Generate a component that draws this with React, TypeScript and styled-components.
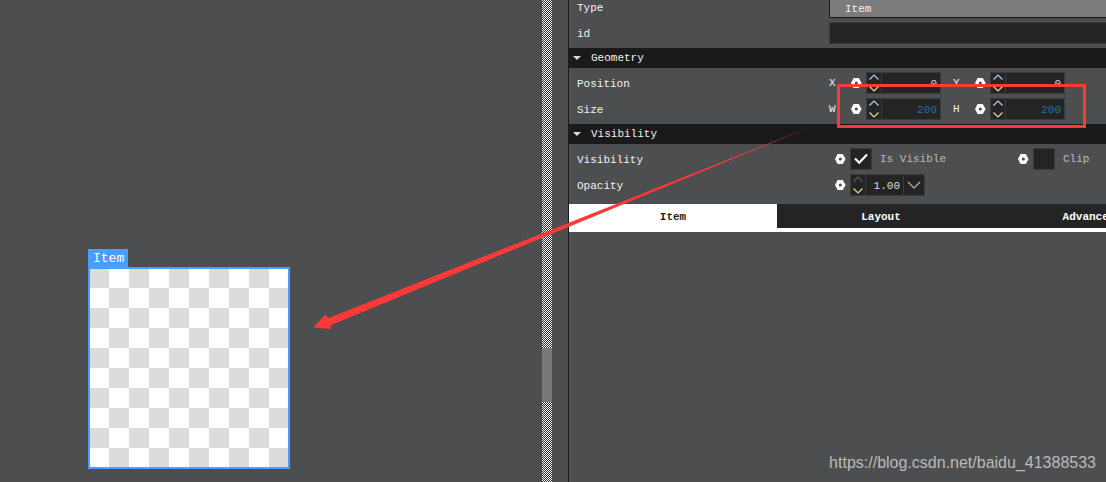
import React from "react";
import styled, { createGlobalStyle, css } from "styled-components";

const GlobalStyle = createGlobalStyle`
  * { box-sizing: border-box; }
  html, body, #root { height: 100%; }
  body {
    margin: 0;
    overflow: hidden;
    background: #4d4e50;
    color: #f2f2f2;
    font: 11px/20px "Liberation Mono", monospace;
  }
  button, input, select { font: inherit; color: inherit; margin: 0; }
`;

const Page = styled.div`
  position: relative;
  display: flex;
  min-height: 100%;
  overflow: hidden;
`;

const Canvas = styled.main`
  flex: 1;
  min-width: 0;
  display: flex;
  justify-content: space-between;
`;

const Stage = styled.div`
  padding: 249px 0 0 88px;
`;

const ItemTag = styled.div`
  width: 40px;
  height: 18px;
  padding-left: 5px;
  background: #4a9eff;
  color: #fff;
  font-size: 13px;
  line-height: 20px;
`;

const Checker = styled.div`
  width: 202px;
  height: 202px;
  border: 2px solid #4a9eff;
  background: repeating-conic-gradient(#fff 0 25%, #dcdcdc 0 50%) -1px -1px / 40px 40px;
`;

const ScrollTrack = styled.div`
  width: 10px;
  margin-right: 16px;
  padding-top: 348px;
  background: repeating-conic-gradient(#2b2b2b 0 25%, #fff 0 50%) 0 0 / 2px 2px;
`;

const ScrollThumb = styled.div`
  height: 54px;
  background: #787878;
`;

const Panel = styled.aside`
  flex: 0 0 538px;
  min-width: 0;
  overflow: hidden;
  border-left: 1px solid #1a1a1a;
`;

const Group = styled.div<{ $cut?: boolean; $last?: boolean }>`
  display: grid;
  gap: 4px;
  padding: 4px 0 ${(p) => (p.$last ? 8 : 4)}px 8px;
  ${(p) => p.$cut && css`margin-top: -8px;`}
`;

const Row = styled.div`
  display: grid;
  grid-template-columns: 252px minmax(0, 1fr);
  height: 22px;
  line-height: 24px;
`;

const Fields = styled.div<{ $inset?: boolean }>`
  display: flex;
  align-items: center;
  height: 22px;
  padding-left: ${(p) => (p.$inset ? 6 : 0)}px;
`;

const TypeSelect = styled.select`
  width: 100%;
  height: 22px;
  padding: 0 15px;
  appearance: none;
  border: 1px solid #1a1a1a;
  border-right: 0;
  border-radius: 0;
  background: #7b7b7b;
`;

const TextInput = styled.input`
  width: 100%;
  height: 22px;
  border: 1px solid #3b3b3c;
  border-right: 0;
  background: #242424;
`;

const Heading = styled.button`
  display: flex;
  align-items: center;
  gap: 10px;
  width: 100%;
  height: 20px;
  padding: 0 4px;
  border: 0;
  background: #1a1a1a;
  text-align: left;
`;

const Unit = styled.div`
  display: flex;
  align-items: center;
  margin-right: 12px;
`;

const UnitLabel = styled.label`
  width: 22px;
`;

const Binding = styled.button`
  display: flex;
  width: 11px;
  height: 22px;
  align-items: center;
  margin-right: 4px;
  padding: 0;
  border: 0;
  background: none;
`;

const SpinBox = styled.div`
  display: flex;
  width: 75px;
  height: 22px;
  border: 1px solid #3b3b3c;
  background: #242424;
`;

const Steps = styled.div`
  display: flex;
  flex-direction: column;
  justify-content: space-between;
  flex: none;
  width: 15px;
  padding: 1px 0;
  border-right: 1px solid #3b3b3c;
`;

const Step = styled.button`
  display: flex;
  justify-content: center;
  height: 6px;
  padding: 0;
  border: 0;
  background: none;
`;

const Value = styled.input<{ $changed?: boolean }>`
  flex: 1;
  width: 0;
  min-width: 0;
  padding: 1px 3px 0;
  border: 0;
  background: none;
  text-align: right;
  color: ${(p) => (p.$changed ? "#1b76ac" : "#dedede")};
`;

const DropButton = styled.button`
  display: flex;
  align-items: center;
  justify-content: center;
  flex: none;
  width: 21px;
  padding: 0;
  border: 0;
  border-left: 1px solid #3b3b3c;
  background: none;
`;

const CheckField = styled.div`
  display: flex;
  flex: 0 0 183px;
  align-items: center;
`;

const CheckLabel = styled.label`
  display: flex;
  align-items: center;
  gap: 8px;
  color: #b9b9b9;
`;

const CheckBox = styled.input`
  width: 22px;
  height: 22px;
  appearance: none;
  border: 1px solid #3b3b3c;
  background: #242424;
`;

const CheckWrap = styled.span`
  position: relative;
  display: flex;

  svg {
    position: absolute;
    inset: 0;
    pointer-events: none;
  }
`;

const Tabs = styled.div`
  display: flex;
  border-bottom: 4px solid #fff;
`;

const Tab = styled.button<{ $active?: boolean }>`
  flex: 0 0 208px;
  height: 24px;
  padding: 2px 0 0;
  border: 0;
  background: ${(p) => (p.$active ? "#fff" : "#242424")};
  color: ${(p) => (p.$active ? "#242424" : "#fff")};
  font-weight: bold;
`;

const Annotation = styled.svg`
  position: absolute;
  top: 0;
  left: 0;
  pointer-events: none;
`;

const Watermark = styled.a`
  position: absolute;
  right: 10px;
  bottom: 9px;
  color: #b9babb;
  font: 16px/20px "Liberation Sans", Arial, sans-serif;
  text-decoration: none;
`;

const HexIcon = () => (
  <svg width="11" height="10" viewBox="0 0 11 10" aria-hidden="true">
    <path
      d="M2.6 0h5.2L10.6 5l-2.8 5H2.6L0 5Z M5.3 3.4a1.6 1.6 0 1 0 0 3.2a1.6 1.6 0 1 0 0-3.2Z"
      fill="#fff"
      fillRule="evenodd"
    />
  </svg>
);

const Chevron = ({ up, color, wide }: { up?: boolean; color: string; wide?: boolean }) => (
  <svg width={wide ? 14 : 10} height={wide ? 8 : 6} viewBox={wide ? "0 0 14 8" : "0 0 10 6"} aria-hidden="true">
    <path
      d={wide ? "M1 1l6 6l6-6" : up ? "M0.500 5.500L5 1l4.500 4.500" : "M0.500 0.500L5 5l4.500-4.500"}
      fill="none"
      stroke={color}
      strokeWidth="1.2"
    />
  </svg>
);

const SectionHeading = ({ title }: { title: string }) => (
  <Heading type="button" aria-expanded="true">
    <svg width="8" height="4" viewBox="0 0 8 4" aria-hidden="true">
      <path d="M0 0h8L4 4Z" fill="#dcdcdc" />
    </svg>
    {title}
  </Heading>
);

const StepButtons = ({ atMax }: { atMax?: boolean }) => (
  <Steps>
    <Step type="button" aria-label="Increase">
      <Chevron up color={atMax ? "#5c5c5c" : "#b4cff0"} />
    </Step>
    <Step type="button" aria-label="Decrease">
      <Chevron color="#ecd3a4" />
    </Step>
  </Steps>
);

const BindingButton = () => (
  <Binding type="button" aria-label="Binding">
    <HexIcon />
  </Binding>
);

const NumberUnit = ({ label, value, changed }: { label: string; value: string; changed?: boolean }) => (
  <Unit>
    <UnitLabel htmlFor={`geometry-${label}`}>{label}</UnitLabel>
    <BindingButton />
    <SpinBox>
      <StepButtons />
      <Value id={`geometry-${label}`} defaultValue={value} $changed={changed} />
    </SpinBox>
  </Unit>
);

const CheckUnit = ({ label, checked }: { label: string; checked?: boolean }) => (
  <CheckField>
    <BindingButton />
    <CheckLabel>
      <CheckWrap>
        <CheckBox type="checkbox" defaultChecked={checked} />
        {checked && (
          <svg width="22" height="22" viewBox="0 0 22 22" aria-hidden="true">
            <path d="M5 10.500l4.200 4.200l7.800-8.200" fill="none" stroke="#fff" strokeWidth="2.200" />
          </svg>
        )}
      </CheckWrap>
      {label}
    </CheckLabel>
  </CheckField>
);

export default function App() {
  return (
    <Page>
      <GlobalStyle />
      <Canvas>
        <Stage>
          <ItemTag>Item</ItemTag>
          <Checker />
        </Stage>
        <ScrollTrack>
          <ScrollThumb />
        </ScrollTrack>
      </Canvas>

      <Panel>
        <Group $cut>
          <Row>
            <label htmlFor="type">Type</label>
            <TypeSelect id="type" defaultValue="Item">
              <option>Item</option>
            </TypeSelect>
          </Row>
          <Row>
            <label htmlFor="item-id">id</label>
            <TextInput id="item-id" />
          </Row>
        </Group>

        <SectionHeading title="Geometry" />
        <Group>
          <Row>
            <span>Position</span>
            <Fields>
              <NumberUnit label="X" value="0" />
              <NumberUnit label="Y" value="0" />
            </Fields>
          </Row>
          <Row>
            <span>Size</span>
            <Fields>
              <NumberUnit label="W" value="200" changed />
              <NumberUnit label="H" value="200" changed />
            </Fields>
          </Row>
        </Group>

        <SectionHeading title="Visibility" />
        <Group $last>
          <Row>
            <span>Visibility</span>
            <Fields $inset>
              <CheckUnit label="Is Visible" checked />
              <CheckUnit label="Clip" />
            </Fields>
          </Row>
          <Row>
            <label htmlFor="opacity">Opacity</label>
            <Fields $inset>
              <BindingButton />
              <SpinBox>
                <StepButtons atMax />
                <Value id="opacity" defaultValue="1.00" />
                <DropButton type="button" aria-label="Opacity slider">
                  <Chevron wide color="#b9b9b9" />
                </DropButton>
              </SpinBox>
            </Fields>
          </Row>
        </Group>

        <Tabs role="tablist">
          <Tab type="button" role="tab" aria-selected="true" $active>Item</Tab>
          <Tab type="button" role="tab" aria-selected="false">Layout</Tab>
          <Tab type="button" role="tab" aria-selected="false">Advanced</Tab>
        </Tabs>
      </Panel>

      <Annotation width="1106" height="482" viewBox="0 0 1106 482" aria-hidden="true">
        <rect x="838.5" y="85.5" width="246" height="41" fill="none" stroke="#ff3838" strokeWidth="3" />
        <path d="M809 127.500L328 318.300L325.700 314.300L313.300 327.500L331.700 329L330 325.500Z" fill="#ff3838" />
      </Annotation>
      <Watermark href="https://blog.csdn.net/baidu_41388533">https://blog.csdn.net/baidu_41388533</Watermark>
    </Page>
  );
}
